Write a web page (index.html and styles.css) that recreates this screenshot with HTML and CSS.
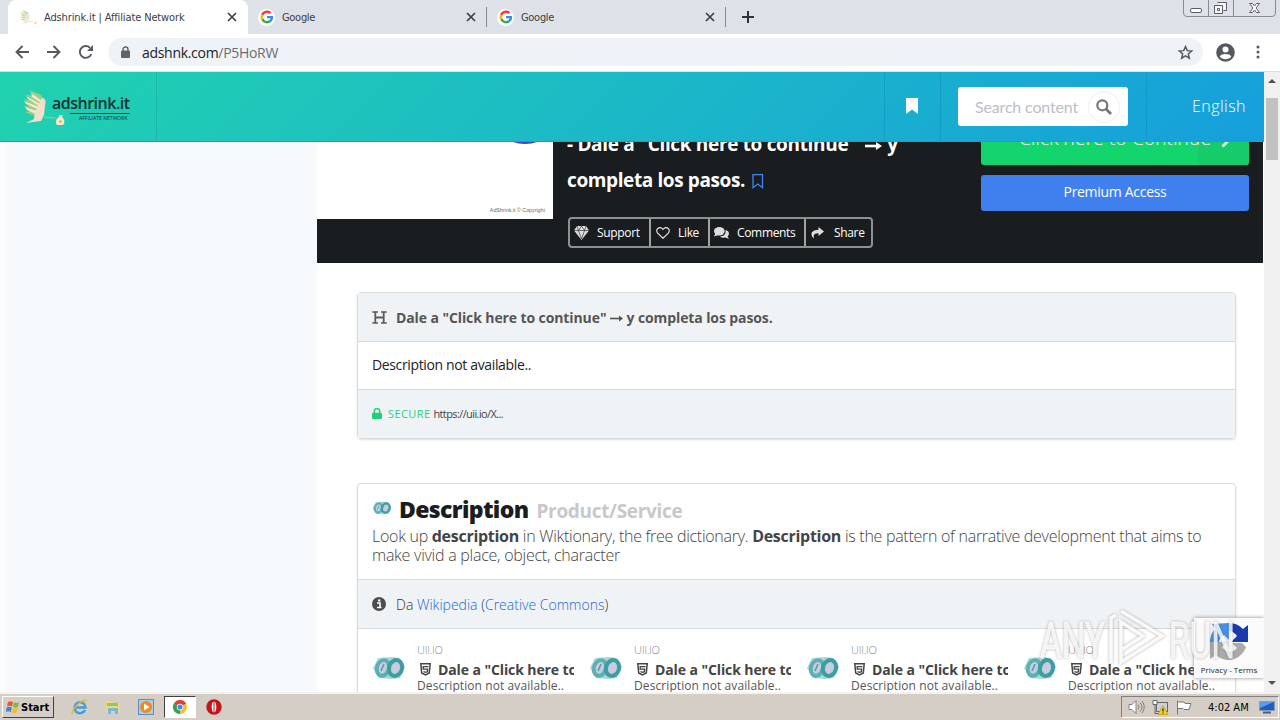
FILE: index.html
```html
<!DOCTYPE html>
<html lang="en">
<head>
    <meta charset="UTF-8">
    <meta name="viewport" content="width=device-width, initial-scale=1.0">
    <link rel="stylesheet" href="styles.css">
    <title>Adshrink.it | Affiliate Network</title>
</head>
<body>

<!-- shared icons -->
<svg class="defs" width="0" height="0">
    <symbol id="google" viewBox="0 0 48 48">
        <path fill="#4285f4" d="M45 24.500c0-1.600-.1-2.700-.4-4H24v7.800h11.800c-.5 3-2.200 5.300-4.700 7l7 5.400c4.300-4 6.900-9.700 6.900-16.200z"/>
        <path fill="#34a853" d="M24 46c6 0 11-2 14.500-5.300l-7.200-5.400C29.500 36.600 27.200 37.500 24 37.500c-5.800 0-10.700-3.900-12.500-9.200l-7.300 5.500C7.800 41 15.300 46 24 46z"/>
        <path fill="#fbbc05" d="M11.500 28.300a13.500 13.500 0 0 1 0-8.600l-7.300-5.600a22 22 0 0 0 0 19.700z"/>
        <path fill="#ea4335" d="M24 10.500c3.300 0 6.200 1.200 8.500 3.300l6.300-6.200C34.900 4 30 2 24 2 15.300 2 7.800 7 4.200 14.100l7.300 5.600C13.300 14.400 18.200 10.500 24 10.500z"/>
    </symbol>
    <symbol id="close" viewBox="0 0 10 10">
        <path d="M1 1l8 8M9 1L1 9" stroke="#3c4043" stroke-width="1.700"/>
    </symbol>
    <symbol id="bird" viewBox="0 0 44 36">
        <path fill="#9ccf80" d="M7 0l6 7-10-3 9 7-11-2 10 7-10 0 10 5-8 1 10 4 9-4 2-9-5-8z"/>
        <path fill="#f1ead0" d="M9 3l11 8 1 3L10 7zM4 6l16 9v3L6 9zM2 11l18 7v3L4 14zM3 17l15 5-2 3-11-5z"/>
        <path fill="#f3e0cb" d="M20 8c3 0 4 3 3 6l-1 11-3 6-15 2 8-4 1-7z"/>
        <path d="M22 27l11 1" stroke="#c9c06a" stroke-width="1.200"/>
        <path fill="#f5ebc8" d="M37 25h4l-1 2c3 3 3 6 1 8h-6c-2-3-1-6 2-8z"/>
        <circle cx="38.500" cy="31.500" r="1.300" fill="#e8a94f"/>
    </symbol>
    <symbol id="links" viewBox="0 0 34 24">
        <path fill="#a9d8da" d="M6 2l14-1 8 1 5 9-5 11-9 1-12-1-6-10z"/>
        <g fill="none" stroke="#3f9da0" stroke-width="4">
            <ellipse cx="11" cy="12" rx="6" ry="8" transform="rotate(18 11 12)" stroke="#5cafb2"/>
            <ellipse cx="23.500" cy="12" rx="6.500" ry="8" transform="rotate(18 23.500 12)"/>
        </g>
        <g fill="#cfc8e0">
            <ellipse cx="10.500" cy="11.500" rx="3.400" ry="5.500" transform="rotate(18 10.500 11.500)"/>
            <ellipse cx="23.500" cy="12" rx="3.400" ry="5.500" transform="rotate(18 23.500 12)"/>
        </g>
        <path d="M9 15l3-7" stroke="#4b9fa3" stroke-width="1.500"/>
    </symbol>
    <symbol id="html5" viewBox="0 0 11 13">
        <path d="M.8.800h9.400l-.9 9.200-3.800 2-3.800-2z" fill="none" stroke="#444" stroke-width="1.500"/>
        <path d="M8.500 3.600H3.200v2.600h4.500l-.3 2.500-1.900.7-2-.7" fill="none" stroke="#444" stroke-width="1.300"/>
    </symbol>
</svg>

<div class="tabs">
    <div class="tab tab-active">
        <svg class="favicon" width="19" height="15"><use href="#bird"/></svg>
        <span class="tab-title tab-title-main">Adshrink.it | Affiliate Network</span>
        <svg class="tab-close" width="10" height="10"><use href="#close"/></svg>
    </div>
    <div class="tab tab-first">
        <span class="google"><svg width="14" height="14"><use href="#google"/></svg></span>
        <span class="tab-title">Google</span>
        <svg class="tab-close" width="10" height="10"><use href="#close"/></svg>
    </div>
    <div class="tab">
        <span class="google"><svg width="14" height="14"><use href="#google"/></svg></span>
        <span class="tab-title">Google</span>
        <svg class="tab-close" width="10" height="10"><use href="#close"/></svg>
    </div>
    <svg class="new-tab" width="12" height="12"><path d="M6 0v12M0 6h12" stroke="#303236" stroke-width="2"/></svg>
    <svg class="window-buttons" width="94" height="17" fill="none" stroke="#868a92">
        <path d="M.5 0v13q0 3.500 3.500 3.500h85q3.500 0 3.500-3.500V0M25.500 0v16M50.500 0v16"/>
        <g stroke="#5b5e64">
            <rect x="7.500" y="8.500" width="11" height="4" rx="1.500" fill="#fff"/>
            <path d="M34.500 2.500h9v8h-3M31.500 5.500h8v8h-8zM34.500 8.500h2v2h-2z" fill="#f4f5f7"/>
            <path d="M66.500 3.500h3l2 2.500 2-2.500h3l-3.500 4.500 3.500 4.500h-3l-2-2.500-2 2.500h-3l3.500-4.500z" fill="#fff"/>
        </g>
    </svg>
</div>

<div class="toolbar">
    <svg width="14" height="14" viewBox="0 0 14 14" fill="none" stroke="#55585c" stroke-width="1.900"><path d="M14 7H1.500M7.500 1l-6 6 6 6"/></svg>
    <svg width="14" height="14" viewBox="0 0 14 14" fill="none" stroke="#55585c" stroke-width="1.900"><path d="M0 7h12.500M6.500 1l6 6-6 6"/></svg>
    <svg width="14" height="14" viewBox="0 0 14 14" fill="none" stroke="#55585c" stroke-width="1.900"><path d="M12.300 9A5.900 5.900 0 1 1 11 2.800"/><path d="M14 0v6H8z" fill="#55585c" stroke="none"/></svg>
    <div class="address">
        <svg width="9" height="12" viewBox="0 0 9 12"><path d="M2 5V3.500a2.500 2.500 0 0 1 5 0V5" fill="none" stroke="#5f6368" stroke-width="1.400"/><rect y="4.500" width="9" height="7.500" rx="1" fill="#5f6368"/></svg>
        <span class="url">adshnk.com<span>/P5HoRW</span></span>
        <svg class="star" width="15" height="15" viewBox="0 0 24 24" fill="none" stroke="#55585c" stroke-width="2.400"><path d="M12 2.500l2.800 6.500 7 .6-5.300 4.700 1.600 6.900-6.100-3.700-6.100 3.700 1.600-6.900L2.200 9.600l7-.6z"/></svg>
    </div>
    <svg class="avatar" width="19" height="19" viewBox="0 0 19 19"><circle cx="9.500" cy="9.500" r="9.300" fill="#55585c"/><circle cx="9.500" cy="6.500" r="3" fill="#fff"/><path d="M3.700 13.500c1.300-3.300 10.300-3.300 11.600 0-2.600 3.600-9 3.600-11.600 0z" fill="#fff"/></svg>
    <svg class="dots" width="4" height="14" fill="#55585c"><circle cx="2" cy="2" r="1.500"/><circle cx="2" cy="7" r="1.500"/><circle cx="2" cy="12" r="1.500"/></svg>
</div>

<div class="viewport">
    <div class="page">
        <header class="header">
            <a class="logo">
                <svg width="44" height="36"><use href="#bird"/></svg>
                <span class="logo-name">ad<u>shrink.it</u><small>AFFILIATE NETWORK</small></span>
            </a>
            <div class="header-bookmark">
                <svg width="12" height="16"><path d="M0 0h12v16l-6-4.500L0 16z" fill="#fff"/></svg>
            </div>
            <div class="header-search">
                <div class="search-box">
                    <span>Search content</span>
                    <i><svg width="16" height="16" fill="none" stroke="#777"><circle cx="6.300" cy="6.300" r="5" stroke-width="2.200"/><path d="M10 10l5 5" stroke-width="2.800"/></svg></i>
                </div>
            </div>
            <div class="header-lang">English</div>
        </header>

        <div class="body">
            <aside class="sidebar"></aside>
            <main class="main">
                <section class="hero">
                    <div class="thumb"><b></b><span>AdShrink.it © Copyright</span></div>
                    <div class="hero-info">
                        <h1><span>- Dale a "Click here to continue" <svg width="17" height="10" viewBox="0 0 17 10"><path d="M0 5h12" stroke="#fff" stroke-width="2.600"/><path d="M11 1l6 4-6 4z" fill="#fff"/></svg> y</span><br>completa los pasos. <svg class="save" width="12" height="15"><path d="M1 .7h9.500v13L5.700 10 1 13.700z" fill="none" stroke="#4183f0" stroke-width="1.300"/></svg></h1>
                        <div class="actions">
                            <a class="support"><svg width="15" height="14" viewBox="0 0 15 14"><path d="M3 0h9l3 4.500L7.500 14 0 4.500z" fill="#ddd"/><path d="M0 4.500h15M4.500 4.500L7.500 13l3-8.500L7.500 0l-3 4.500L3 0m9 0l-1.500 4.500" fill="none" stroke="#1b1c1d" stroke-width=".6"/></svg>Support</a>
                            <a class="like"><svg width="14" height="12" viewBox="0 0 14 12"><path d="M7 11.300L1.700 6.200C-.8 3 2.500-.8 5.700 1.200L7 2.500l1.300-1.300c3.200-2 6.500 1.800 4 5z" fill="none" stroke="#ddd" stroke-width="1.200"/></svg>Like</a>
                            <a class="comments"><svg width="15" height="12" viewBox="0 0 15 12"><ellipse cx="5.300" cy="4.300" rx="5.300" ry="4.200" fill="#ddd"/><path d="M1.500 6L0 9.500l4-1.300zM11.300 3c4 .5 4.700 4.500 2.200 6.200l1.500 2.600-4-1.200c-2 .3-4-.2-5-1.200 4 0 6.500-3 5.300-6.400z" fill="#ddd"/></svg>Comments</a>
                            <a class="share"><svg width="13" height="12" viewBox="0 0 13 12"><path d="M7.500 0L13 4.500 7.500 9V6.300C3.500 6.200 2 7.500 3 11.500-1.500 8 0 3 7.500 2.800z" fill="#ddd"/></svg>Share</a>
                        </div>
                    </div>
                    <div class="hero-buttons">
                        <a class="btn btn-green"><span>Click here to Continue</span><i><svg width="9" height="13"><path d="M1.500 1.500l5 5-5 5" fill="none" stroke="#e6fbef" stroke-width="2.800"/></svg></i></a>
                        <a class="btn btn-blue">Premium Access</a>
                    </div>
                </section>

                <section class="card card-link">
                    <div class="card-head">
                        <svg width="15" height="13" viewBox="0 0 15 13" fill="none" stroke="#5a5a5a" stroke-width="1.800"><path d="M3.300 1v11M11.700 1v11M3 6.500h9"/><path d="M.3 1h5.700M9 1h5.700M.3 12h5.700M9 12h5.700" stroke-width="1.500"/></svg>
                        <b>Dale a "Click here to continue" <svg width="13" height="7"><path d="M0 3.500h10" stroke="#555" stroke-width="1.600"/><path d="M9 .5l4 3-4 3z" fill="#555"/></svg> y completa los pasos.</b>
                    </div>
                    <div class="card-text">Description not available..</div>
                    <div class="card-secure">
                        <svg width="10" height="11" viewBox="0 0 10 11"><path d="M2.300 5V3.300a2.700 2.700 0 0 1 5.400 0V5" fill="none" stroke="#21d07a" stroke-width="1.500"/><rect y="4.700" width="10" height="6.300" rx="1" fill="#21d07a"/></svg>
                        <em>SECURE</em><span>https://uii.io/X...</span>
                    </div>
                </section>

                <section class="card card-wiki">
                    <div class="wiki-head">
                        <h2><svg width="20" height="14"><use href="#links"/></svg><span>Description</span><small>Product/Service</small></h2>
                        <p><span class="line-1">Look up <b>description</b> in Wiktionary, the free dictionary. <b>Description</b> is the pattern of narrative development that aims to</span><br>make vivid a place, object, character</p>
                    </div>
                    <div class="wiki-source">
                        <svg width="14" height="14"><circle cx="7" cy="7" r="7" fill="#4d4d4d"/><path d="M5 6h3v4.300M5 10.500h4.500" stroke="#fff" stroke-width="1.600" fill="none"/><circle cx="7.200" cy="3.500" r="1.200" fill="#fff"/></svg>
                        <span>Da <a>Wikipedia</a> (<a>Creative Commons</a>)</span>
                    </div>
                    <div class="items">
                        <div class="item">
                            <svg width="34" height="24"><use href="#links"/></svg>
                            <div><small>UII.IO</small><b><svg width="11" height="13"><use href="#html5"/></svg>Dale a "Click here to</b><span>Description not available..</span></div>
                        </div>
                        <div class="item">
                            <svg width="34" height="24"><use href="#links"/></svg>
                            <div><small>UII.IO</small><b><svg width="11" height="13"><use href="#html5"/></svg>Dale a "Click here to</b><span>Description not available..</span></div>
                        </div>
                        <div class="item">
                            <svg width="34" height="24"><use href="#links"/></svg>
                            <div><small>UII.IO</small><b><svg width="11" height="13"><use href="#html5"/></svg>Dale a "Click here to</b><span>Description not available..</span></div>
                        </div>
                        <div class="item">
                            <svg width="34" height="24"><use href="#links"/></svg>
                            <div><small>UII.IO</small><b><svg width="11" height="13"><use href="#html5"/></svg>Dale a "Click here to</b><span>Description not available..</span></div>
                        </div>
                    </div>
                </section>
            </main>
        </div>

        <div class="recaptcha">
            <svg width="38" height="38" viewBox="0 0 38 38">
                <path d="M19 0a19 19 0 0 1 14 6l5-4v17H21l6-6c-2-3-5-5-8-5z" fill="#1c3aa9"/>
                <path d="M19 0v17l-5-5c-4 3-5 5-5 8H0A19 19 0 0 1 5 6L2 1z" fill="#4a90e8"/>
                <path d="M0 19h17l-5 5c4 6 11 6 15 1l-5-5h10l4 4c-4 12-19 18-30 8l-6 4z" fill="#ababab"/>
            </svg>
            <span>Privacy - Terms</span>
        </div>
    </div>
    <div class="scrollbar">
        <svg width="8" height="4"><path d="M0 4l4-4 4 4z" fill="#505050"/></svg>
        <div class="thumb-bar"></div>
        <svg width="8" height="4"><path d="M0 0h8L4 4z" fill="#505050"/></svg>
    </div>
</div>

<svg class="watermark" width="200" height="64">
    <g fill="#fff" fill-opacity=".8" stroke="#fff" stroke-opacity=".6" font-family="Roboto, sans-serif" font-size="50">
        <text x="2" y="50" textLength="65" lengthAdjust="spacingAndGlyphs">ANY</text>
        <text x="131" y="50" textLength="66" lengthAdjust="spacingAndGlyphs">RUN</text>
    </g>
    <g fill="none" stroke="#fff" stroke-opacity=".9" stroke-width="3.500">
        <path d="M83 3l41 25-41 26V14l22 14-22 14"/>
        <path d="M73 55V10l5-3"/>
    </g>
</svg>

<div class="taskbar">
    <div class="start">
        <svg width="14" height="14" viewBox="0 0 14 14"><path d="M2 2c2-1 3-1 5 0L6 6.500c-2-1-3-1-5 0z" fill="#e8592b"/><path d="M8 2.300c2 1 3 1 5 0L12 7c-2 1-3 1-5 0z" fill="#7fba3c"/><path d="M.8 7.500c2-1 3-1 5 0l-1 4.500c-2-1-3-1-5 0z" fill="#3a84d8"/><path d="M6.800 8c2 1 3 1 5 0l-1 4.500c-2 1-3 1-5 0z" fill="#f5bd2a"/></svg>
        Start
    </div>
    <svg class="quick ie" width="17" height="17" viewBox="0 0 17 17"><path d="M14 11a5.500 5.500 0 1 1 .5-2.500H4" fill="none" stroke="#3fa0e0" stroke-width="2.500"/><path d="M1.500 15C-1 12 11-1 15.500 2" fill="none" stroke="#e3b53c" stroke-width="1.500"/></svg>
    <svg class="quick" width="16" height="15" viewBox="0 0 16 15"><path d="M1 1h6l1 2h7v9H1z" fill="#f3d878"/><path d="M2 3h11v3H2z" fill="#8fc76b"/><path d="M3 14V8h10v6h-3v-3H6v3z" fill="#78b7e0"/></svg>
    <svg class="quick" width="16" height="16" viewBox="0 0 16 16"><rect x=".5" y=".5" width="15" height="15" fill="#a9cdec" stroke="#5791c4"/><circle cx="8" cy="8" r="6" fill="#f28a1c"/><path d="M6 4.500l5.500 3.500L6 11.500z" fill="#fff"/></svg>
    <div class="task-active">
        <svg width="14" height="14" viewBox="0 0 14 14"><circle cx="7" cy="7" r="7" fill="#f5c22b"/><path d="M7 7L.9 3.500A7 7 0 0 1 13.100 3.500z" fill="#df4235"/><path d="M7 7v7A7 7 0 0 1 .9 3.500z" fill="#35a253"/><circle cx="7" cy="7" r="3.200" fill="#fff"/><circle cx="7" cy="7" r="2.500" fill="#4285f4"/></svg>
    </div>
    <svg class="quick opera" width="16" height="16" viewBox="0 0 16 16"><circle cx="8" cy="8" r="7.700" fill="#c4141b"/><ellipse cx="8" cy="8" rx="2.300" ry="5.300" fill="#fff"/><path d="M8 3v10" stroke="#c4141b" stroke-width="1"/></svg>
    <div class="tray">
        <svg width="17" height="14" fill="none" stroke="#808080"><path d="M1 4.500h3l4-4v13l-4-4H1z" fill="#fff"/><path d="M10 4.500q2 2.500 0 5M12 2.500q4 4.500 0 9M14 1q4.500 6 0 12"/></svg>
        <svg width="17" height="15"><rect x="4.500" y="2.500" width="11" height="9" fill="#c7d2dd" stroke="#666"/><path d="M1 .5h4v4H1zM3 5v9M3 13.500h6" fill="#fff" stroke="#666"/><path d="M11 5.500l5 9H6z" fill="#f7cf1d" stroke="#b38d00" stroke-width=".6"/><path d="M11 8.500v3M11 12.500v1" stroke="#222" stroke-width="1.200"/></svg>
        <svg width="17" height="15"><path d="M1.500.5v14M2 2h6l1 1.500h6l-2 6H8L7 8.500H2" fill="#fff" stroke="#777"/></svg>
        <span>4:02 AM</span>
        <svg width="16" height="13"><path d="M0 0h16v10H0z" fill="#8e9cad"/><path d="M1 1h14v8H1z" fill="#1c5fc4"/><path d="M1 1h14L1 7z" fill="#5b9be8"/><path d="M4 11.500h8" stroke="#44607c" stroke-width="2"/></svg>
    </div>
</div>

</body>
</html>
```
FILE: styles.css
```css
* {
    box-sizing: border-box;
}

body {
    margin: 0;
    width: 1280px;
    height: 720px;
    overflow: hidden;
    font-family: "Open Sans", sans-serif;
    background-color: #fff;
}

svg {
    display: block;
    flex: none;
}

.defs {
    position: absolute;
}

/* browser tabs */
.tabs {
    height: 34px;
    display: flex;
    align-items: center;
    background-color: #dee1e8;
    font: 11px "DejaVu Sans Condensed", sans-serif;
    color: #3c4043;
}

.tab {
    width: 239px;
    height: 20px;
    padding: 0 10px 0 10px;
    display: flex;
    align-items: center;
    border-right: 1px solid #85888e;
}

.tab-active {
    width: 240px;
    height: 34px;
    margin-left: 8px;
    padding: 0 11px;
    border: 0;
    border-radius: 8px 8px 0 0;
    background-color: #fff;
}

.favicon {
    opacity: .8;
}

.tab-title {
    margin-left: 7px;
    letter-spacing: -.3px;
    white-space: nowrap;
}

.tab-title-main {
    margin-left: 6px;
    letter-spacing: -.13px;
}

.tab-close {
    margin-left: auto;
}

.google {
    width: 17px;
    height: 17px;
    display: flex;
    align-items: center;
    justify-content: center;
    border-radius: 50%;
    background-color: #fff;
}

.new-tab {
    margin-left: 16px;
}

.window-buttons {
    margin-left: auto;
    margin-right: 3px;
    align-self: flex-start;
}

/* browser toolbar */
.toolbar {
    height: 38px;
    padding: 0 20px 1px 15px;
    display: flex;
    align-items: center;
    gap: 18px;
    border-bottom: 1px solid #dcdfe2;
    background-color: #fff;
}

.address {
    flex: none;
    width: 1095px;
    height: 28px;
    margin-left: -3px;
    padding: 0 10px 0 13px;
    display: flex;
    align-items: center;
    border-radius: 14px;
    background-color: #eff3f7;
}

.url {
    margin-left: 12px;
    font-size: 14px;
    letter-spacing: -.3px;
    color: #202124;
}

.url span {
    color: #6a6d72;
}

.star {
    margin-left: auto;
}

.avatar {
    margin-left: -5px;
}

.dots {
    margin-left: 3px;
}

/* page viewport */
.viewport {
    height: 620px;
    display: flex;
}

.page {
    position: relative;
    width: 1264px;
    overflow: hidden;
}

.header {
    height: 70px;
    display: flex;
    background: linear-gradient(135deg, #21d2ae 0%, #1cbbc5 45%, #169fdc 100%);
    border-bottom: 1px solid #18a7b0;
}

.logo {
    width: 157px;
    padding: 2px 0 0 22px;
    display: flex;
    align-items: center;
    border-right: 1px solid rgba(0, 90, 110, .16);
}

.logo-name {
    margin-left: -14px;
    padding-top: 1px;
    font-size: 16px;
    font-weight: 600;
    line-height: 18px;
    letter-spacing: -.5px;
    color: #17312f;
}

.logo-name u {
    text-underline-offset: 4px;
    text-decoration-thickness: 1px;
}

.logo-name small {
    display: block;
    margin-left: 27px;
    padding-top: 2px;
    font-size: 5px;
    line-height: 8px;
    letter-spacing: .05px;
    font-weight: 400;
}

.header-bookmark {
    width: 57px;
    margin-left: 727px;
    padding: 0 2px 2px 0;
    display: flex;
    align-items: center;
    justify-content: center;
    border: solid rgba(0, 90, 140, .18);
    border-width: 0 1px;
}

.header-search {
    width: 206px;
    padding: 15px 0 0 17px;
    border-right: 1px solid rgba(0, 90, 140, .18);
}

.search-box {
    width: 170px;
    height: 39px;
    padding: 0 8px 0 17px;
    display: flex;
    align-items: center;
    justify-content: space-between;
    border-radius: 3px;
    background-color: #fff;
    font: 16px Lato, sans-serif;
    letter-spacing: -.16px;
    color: #bdbdc6;
}

.search-box i {
    width: 32px;
    height: 32px;
    display: flex;
    align-items: center;
    justify-content: center;
    border: 1px solid #eee;
    border-radius: 50%;
}

.header-lang {
    flex: 1;
    padding-right: 18px;
    text-align: right;
    font-size: 16px;
    font-weight: 300;
    line-height: 68px;
    letter-spacing: .47px;
    color: #fff;
}

.body {
    display: flex;
}

.sidebar {
    width: 317px;
    border-left: 6px solid #fcfdfe;
    background-color: #f7fafc;
}

.main {
    width: 947px;
    height: 550px;
}

/* hero */
.hero {
    width: 946px;
    height: 121px;
    display: flex;
    overflow: hidden;
    background-color: #1a1d1f;
}

.thumb {
    width: 236px;
    height: 77px;
    padding-right: 8px;
    display: flex;
    flex-direction: column;
    justify-content: space-between;
    align-items: flex-end;
    background-color: #fff;
    font: 5.300px/18px "Liberation Sans", sans-serif;
    color: #666;
}

.thumb b {
    width: 40px;
    height: 20px;
    margin: -18px 0 0 0;
    border-radius: 50%;
    background-color: #3c48c8;
}

.hero-info {
    width: 428px;
    padding-left: 14px;
}

.hero h1 {
    height: 75px;
    margin: -16px 0 0;
    font-size: 19px;
    font-weight: 700;
    line-height: 36px;
    letter-spacing: -.39px;
    color: #fff;
    white-space: nowrap;
}

.hero h1 span {
    letter-spacing: -.33px;
}

.hero h1 svg {
    display: inline-block;
    margin: 0 1px 0 3px;
}

.hero h1 .save {
    margin: 0 0 -2px 2px;
}

.actions {
    width: 305px;
    height: 31px;
    margin: 16px 0 0 1px;
    display: flex;
    border: 2px solid #8d9192;
    border-radius: 4px;
    font-size: 12px;
    letter-spacing: -.33px;
    color: #fff;
}

.actions a {
    display: flex;
    align-items: center;
    gap: 8px;
    padding-left: 4px;
    border-right: 2px solid #a0a2a3;
}

.actions .support {
    width: 81px;
}

.actions .like {
    width: 59px;
    padding-left: 5px;
}

.actions .comments {
    width: 96px;
}

.actions .share {
    flex: 1;
    gap: 10px;
    padding-left: 5px;
    border: 0;
}

.hero-buttons {
    width: 268px;
}

.btn {
    display: flex;
    justify-content: center;
    border-radius: 3px;
    color: #fff;
}

.btn-green {
    height: 58px;
    margin-top: -35px;
    padding-left: 38px;
    justify-content: space-between;
    overflow: hidden;
    background-color: #14d56d;
    font-size: 19px;
    font-weight: 300;
    line-height: 62px;
    letter-spacing: .18px;
    white-space: nowrap;
}

.btn-green span {
    z-index: 1;
    position: relative;
}

.btn-green i {
    flex: none;
    width: 51px;
    margin-left: -13px;
    padding: 28px 0 0 23px;
    background-color: #16cb69;
}

.btn-blue {
    height: 36px;
    margin-top: 10px;
    background-color: #3f80ee;
    font-size: 14px;
    line-height: 34px;
    letter-spacing: -.3px;
}

/* cards */
.card {
    width: 879px;
    margin-left: 40px;
    border: 1px solid #dadbdc;
    border-radius: 4px;
    box-shadow: 0 1px 2px rgba(34, 36, 38, .15);
}

.card-link {
    height: 147px;
    margin-top: 29px;
}

.card-head,
.card-secure,
.wiki-source {
    display: flex;
    align-items: center;
    padding-left: 14px;
    background-color: #f0f3f5;
}

.card-head {
    height: 49px;
    border-bottom: 1px solid #d8d9da;
    font-size: 14px;
    letter-spacing: -.1px;
    color: #555;
}

.card-head b {
    margin-left: 9px;
}

.card-head b svg {
    display: inline-block;
    vertical-align: 1px;
}

.card-text {
    height: 47px;
    padding-left: 14px;
    font-size: 14px;
    line-height: 46px;
    letter-spacing: -.36px;
    color: #222;
}

.card-secure {
    height: 49px;
    padding-bottom: 2px;
    border-top: 1px solid #d8d9da;
    font-size: 11px;
    color: #444;
}

.card-secure em {
    margin: 0 3px 0 6px;
    font-style: normal;
    letter-spacing: .4px;
    color: #29cf80;
}

.card-secure span {
    letter-spacing: -.6px;
}

.card-wiki {
    height: 400px;
    margin-top: 44px;
}

.wiki-head {
    height: 96px;
    padding: 8px 14px 0;
    border-bottom: 1px solid #d8d9da;
}

.wiki-head h2 {
    height: 35px;
    margin: 0;
    display: flex;
    align-items: baseline;
    font-size: 23px;
    font-weight: 800;
    line-height: 34px;
    letter-spacing: -.65px;
    color: #1b1c1d;
}

.wiki-head h2 svg {
    align-self: center;
    margin: -4px 7px 0 0;
}

.wiki-head h2 small {
    margin-left: 8px;
    font-size: 19px;
    font-weight: 700;
    letter-spacing: -.31px;
    color: #c8c8c8;
}

.wiki-head p {
    margin: 0;
    font-size: 16px;
    font-weight: 300;
    line-height: 19px;
    letter-spacing: -.25px;
    color: #444;
    white-space: nowrap;
}

.wiki-head .line-1 {
    letter-spacing: -.28px;
}

.wiki-head p b {
    font-weight: 700;
}

.wiki-source {
    height: 49px;
    border-bottom: 1px solid #d8d9da;
    font-size: 14px;
    font-weight: 300;
    color: #333;
}

.wiki-source span {
    margin-left: 10px;
}

.wiki-source a {
    color: #2463d6;
}

.items {
    display: flex;
    padding: 12px 0 0 14px;
}

.item {
    flex: none;
    width: 217px;
    display: flex;
}

.item:last-child {
    width: 202px;
}

.item > svg {
    margin-top: 15px;
}

.item div {
    width: 157px;
    margin-left: 11px;
    overflow: hidden;
    white-space: nowrap;
}

.item small,
.item span {
    display: block;
}

.item small {
    font-size: 11px;
    font-weight: 300;
    line-height: 18px;
    letter-spacing: -.25px;
    color: #888;
}

.item b {
    display: flex;
    align-items: center;
    height: 20px;
    padding-left: 3px;
    font-size: 14px;
    letter-spacing: -.1px;
    color: #444;
}

.item b svg {
    margin-right: 7px;
}

.item span {
    font-size: 12px;
    line-height: 13px;
    letter-spacing: .09px;
    color: #555;
}

.recaptcha {
    position: absolute;
    right: 0;
    bottom: 14px;
    width: 70px;
    height: 60px;
    padding-top: 5px;
    display: flex;
    flex-direction: column;
    align-items: center;
    background-color: #fafafa;
    box-shadow: 0 0 4px #888;
    font: 8px "Open Sans", sans-serif;
    color: #222;
}

.recaptcha span {
    margin-top: 3px;
}

.scrollbar {
    width: 16px;
    display: flex;
    flex-direction: column;
    align-items: center;
    padding: 7px 0;
    background-color: #f1f1f1;
}

.thumb-bar {
    width: 12px;
    height: 62px;
    margin: 15px 0 auto;
    background-color: #c1c1c1;
}

.watermark {
    position: absolute;
    left: 1038px;
    top: 608px;
    filter: drop-shadow(0 0 1.500px rgba(0, 0, 0, .35));
}

/* taskbar */
.taskbar {
    position: relative;
    height: 28px;
    padding-left: 2px;
    display: flex;
    align-items: center;
    border-top: 2px solid #f5f3f0;
    background-color: #d5cec6;
    font: 11px "DejaVu Sans Condensed", sans-serif;
    color: #000;
}

.start {
    width: 52px;
    height: 22px;
    padding-left: 3px;
    display: flex;
    align-items: center;
    gap: 1px;
    border: 1px solid #fff;
    border-right-color: #404040;
    border-bottom-color: #404040;
    font-weight: 700;
}

.quick {
    margin-right: 17px;
}

.ie {
    margin-left: 17px;
}

.task-active {
    width: 32px;
    height: 22px;
    margin-left: -7px;
    display: flex;
    align-items: center;
    justify-content: center;
    border: 1px solid #404040;
    border-right-color: #fff;
    border-bottom-color: #fff;
    background-color: #fff;
}

.opera {
    margin-left: 10px;
}

.tray {
    width: 158px;
    height: 22px;
    margin: 0 1px 0 auto;
    padding-left: 6px;
    display: flex;
    align-items: center;
    gap: 7px;
    border: 1px solid #808080;
    border-right-color: #fff;
    border-bottom-color: #fff;
}

.tray span {
    margin: 0 3px 0 8px;
    white-space: nowrap;
}
```
